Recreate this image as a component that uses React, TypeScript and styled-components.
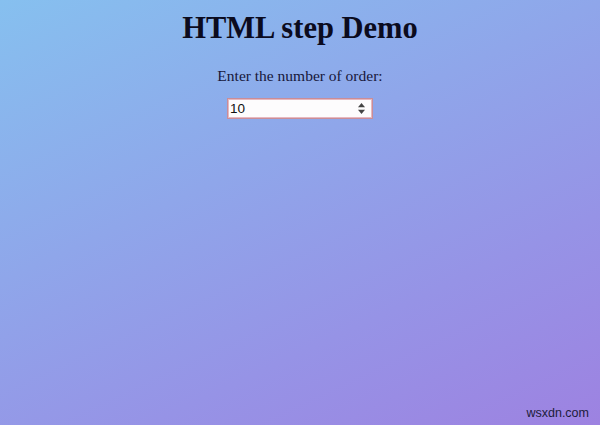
import React from 'react';
import styled, { createGlobalStyle } from 'styled-components';

const GlobalStyle = createGlobalStyle`
  html, body {
    margin: 0;
    padding: 0;
  }
  body {
    font-family: "Liberation Serif", "Times New Roman", serif;
  }
`;

const Page = styled.div`
  position: relative;
  width: 600px;
  height: 425px;
  overflow: hidden;
  background: linear-gradient(155deg, #86c0ef 0%, #8fa6ea 40%, #9693e6 70%, #9d82e1 100%);
  display: flex;
  flex-direction: column;
  align-items: center;
  text-align: center;
  color: #0b0b1e;
`;

const Title = styled.h1`
  margin: 11px 0 0;
  font-size: 30.5px;
  font-weight: 700;
  line-height: 34px;
`;

const Label = styled.p`
  margin: 22px 0 0;
  font-size: 15.5px;
  line-height: 18px;
  color: #17173a;
`;

const Field = styled.div`
  position: relative;
  margin-top: 13px;
  width: 146px;
  height: 21px;
`;

const NumberInput = styled.input`
  box-sizing: border-box;
  width: 100%;
  height: 100%;
  padding: 0 16px 0 2px;
  border: 1px solid #c98d98;
  box-shadow: inset 0 0 0 1px #e7b8c0;
  background: #fdfcfd;
  font-family: "Liberation Sans", Arial, sans-serif;
  font-size: 13.5px;
  color: #111;
  outline: none;
`;

const Spinner = styled.svg`
  position: absolute;
  right: 8px;
  top: 5px;
  width: 7px;
  height: 11px;
  pointer-events: none;
`;

const Watermark = styled.span`
  position: absolute;
  right: 11px;
  bottom: 5px;
  font-family: "Liberation Sans", Arial, sans-serif;
  font-size: 12.5px;
  color: #1c1c3a;
`;

const App = () => {
  return (
    <>
      <GlobalStyle />
      <Page>
        <Title>HTML step Demo</Title>
        <Label>Enter the number of order:</Label>
        <Field>
          <NumberInput type="text" defaultValue="10" />
          <Spinner viewBox="0 0 7 11">
            <polygon points="3.5,0 7,4.2 0,4.2" fill="#444" />
            <polygon points="0,6.8 7,6.8 3.5,11" fill="#444" />
          </Spinner>
        </Field>
        <Watermark>wsxdn.com</Watermark>
      </Page>
    </>
  );
};

export default App;
